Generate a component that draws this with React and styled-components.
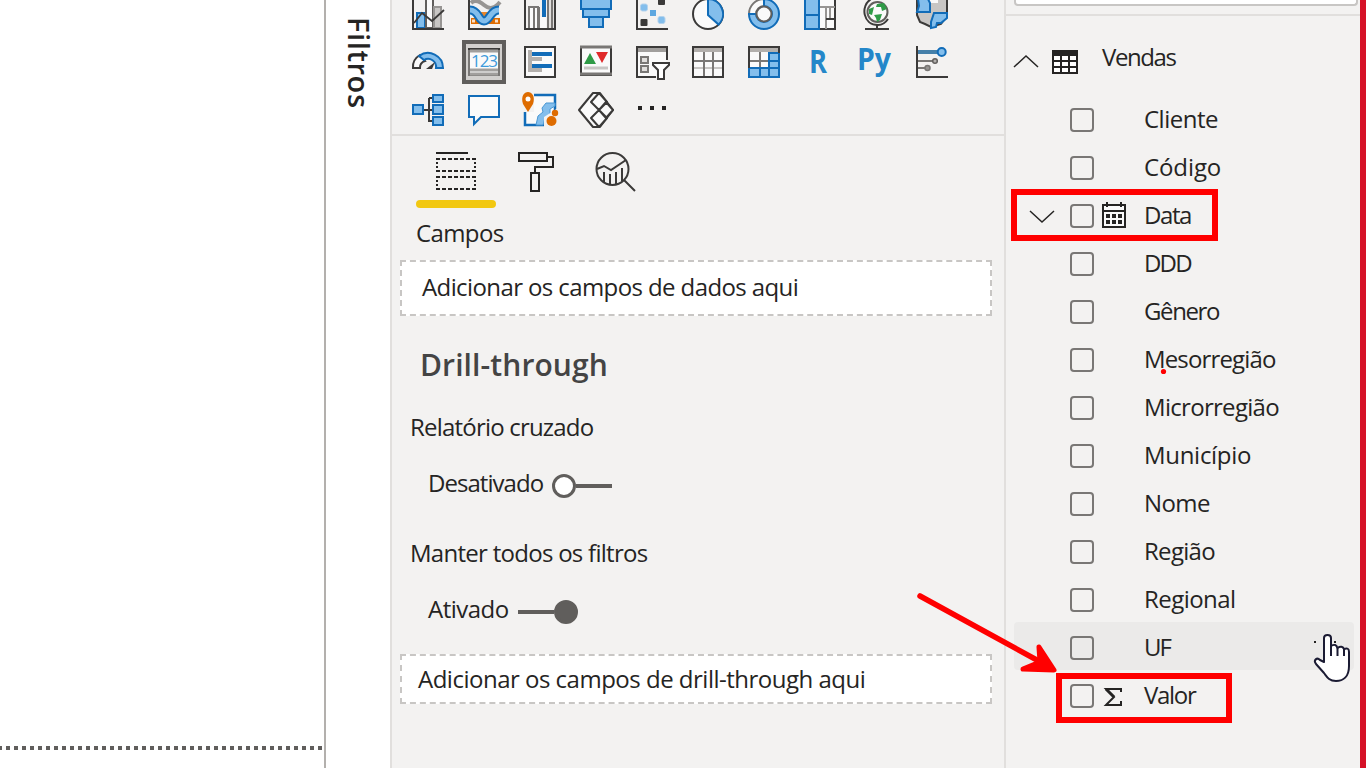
import React from "react";
import styled, { createGlobalStyle } from "styled-components";

const ink = "#252423";
const dark = "#3b3a39";
const grey = "#605e5c";
const blue = "#116cb8";
const sky = "#83beec";
const orange = "#de6c00";

const Global = createGlobalStyle`
  body { margin: 0; background: #fff; overflow: hidden; }
  * { box-sizing: border-box; }
`;

const Screen = styled.div`
  position: relative;
  display: flex;
  width: 1366px;
  height: 768px;
  overflow: hidden;
  font-family: "Open Sans", "Noto Sans", sans-serif;
  font-size: 24px;
  color: ${ink};
  white-space: nowrap;
`;

const Canvas = styled.main`
  flex: 1;
  display: flex;
  flex-direction: column;
  justify-content: flex-end;
  padding: 0 2px 18px 0;
  background: #fff;
`;

const PageEdge = styled.div`
  height: 4px;
  background: repeating-linear-gradient(90deg, ${grey} 0 4px, #fff 4px 8px) -2px 0;
`;

const FiltersPane = styled.aside`
  width: 66px;
  border-left: 2px solid #b3b0ad;
  background: #fff;
  padding: 17px 0 0 12px;
`;

const FiltersTitle = styled.div`
  writing-mode: vertical-rl;
  width: 42px;
  line-height: 42px;
  font-size: 29px;
  font-weight: 600;
  letter-spacing: 0.6px;
`;

const VisualPane = styled.section`
  width: 614px;
  overflow: hidden;
  border-left: 2px solid #e1dfdd;
  background: #f3f2f1;
`;

const VisualGrid = styled.div`
  display: grid;
  grid-template-columns: repeat(10, 56px);
  grid-auto-rows: 48px;
  margin-top: -10px;
  padding-left: 8px;
`;

const VisualCell = styled.div`
  display: flex;
  align-items: center;
  justify-content: center;
`;

const Selected = styled.div`
  display: flex;
  width: 44px;
  height: 44px;
  padding: 2px;
  border: 4px solid ${grey};
  background: #d2d0ce;
  align-items: center;
  justify-content: center;
`;

const Icon = styled.svg`
  display: block;
  flex: none;
  overflow: visible;
`;

const Tabs = styled.div`
  display: flex;
  height: 74px;
  padding-left: 24px;
  border-top: 2px solid #e1dfdd;
`;

const Tab = styled.div`
  display: flex;
  flex-direction: column;
  justify-content: space-between;
  align-items: center;
  width: 80px;
  padding-top: 16px;
`;

const TabMark = styled.div`
  width: 80px;
  height: 8px;
  border-radius: 4px;
  background: ${(p) => (p.$on ? "#f2c811" : "transparent")};
`;

const Line = styled.div`
  display: flex;
  align-items: center;
  height: 32px;
  line-height: 32px;
  margin-top: ${(p) => p.$gap || 0}px;
  padding-left: ${(p) => p.$left}px;
  letter-spacing: ${(p) => p.$track ?? -0.5}px;
`;

const DropZone = styled.div`
  display: flex;
  align-items: center;
  width: 592px;
  height: ${(p) => p.$h}px;
  margin: ${(p) => p.$gap}px 0 0 8px;
  padding: 0 0 ${(p) => p.$lift ?? 2}px ${(p) => p.$left}px;
  border: 2px dashed #c8c6c4;
  background: #fff;
  letter-spacing: ${(p) => p.$track}px;
`;

const SectionTitle = styled.h2`
  margin: 27px 0 0 28px;
  height: 44px;
  line-height: 44px;
  font-size: 30px;
  font-weight: 600;
  color: #444;
  letter-spacing: 0.1px;
`;

const Switch = styled.div`
  display: flex;
  align-items: center;
  flex-direction: ${(p) => (p.$on ? "row-reverse" : "row")};
  margin: 6px 0 0 9px;
`;
const Knob = styled.div`
  width: 24px;
  height: 24px;
  border: 3px solid ${grey};
  border-radius: 50%;
  background: ${(p) => (p.$on ? grey : "#fff")};
`;
const Track = styled.div`
  width: 36px;
  height: 4px;
  background: ${grey};
`;

const FieldsPane = styled.section`
  width: 356px;
  border-left: 2px solid #e1dfdd;
  background: #f3f2f1;
`;

const SearchSlot = styled.div`
  height: 16px;
  padding: 0 1px 0 8px;
  border-bottom: 2px solid #e1dfdd;
`;
const SearchBox = styled.div`
  width: 344px;
  height: 6px;
  border: 2px solid #c8c6c4;
  border-top: 0;
  border-radius: 0 0 4px 4px;
  background: #fff;
`;

const TableRow = styled.div`
  display: flex;
  align-items: flex-start;
  height: 78px;
  padding-left: 8px;
`;
const TableChevron = styled(Icon)`
  margin-top: 38px;
`;
const TableGlyph = styled(Icon)`
  margin: 34px 0 0 14px;
`;
const TableName = styled.div`
  margin: 24px 0 0 24px;
  line-height: 34px;
  letter-spacing: -1.4px;
`;

const FieldRow = styled.div`
  display: grid;
  grid-template-columns: 56px 32px 42px 1fr;
  align-items: center;
  height: 48px;
  margin: 0 6px 0 8px;
  border-radius: 4px;
  background: ${(p) => (p.$hover ? "#ebeae9" : "transparent")};
`;
const Slot = styled.div`
  padding: ${(p) => p.$top || 0}px 0 0 ${(p) => p.$left || 0}px;
`;
const Check = styled.div`
  width: 24px;
  height: 24px;
  margin-top: 4px;
  border: 2px solid #797775;
  border-radius: 4px;
`;
const FieldName = styled.div`
  padding-top: 2px;
  line-height: 34px;
  letter-spacing: ${(p) => p.$track}px;
`;

const RedStrip = styled.div`
  width: 6px;
  background: #d51127;
`;

const Highlight = styled.div`
  position: absolute;
  left: ${(p) => p.$x}px;
  top: ${(p) => p.$y}px;
  width: ${(p) => p.$w}px;
  height: ${(p) => p.$h}px;
  border: 6px solid #f00;
`;
const Overlay = styled.svg`
  position: absolute;
  left: ${(p) => p.$x}px;
  top: ${(p) => p.$y}px;
  overflow: visible;
`;

const axis = <path d="M1 -2V31H32" fill="none" stroke={dark} strokeWidth="2" />;

const visuals = [
  <g>
    <rect x="5" y="15" width="8" height="15" fill={sky} stroke={blue} strokeWidth="2" />
    <rect x="14" y="1" width="7" height="29" fill="#fafafa" stroke={grey} strokeWidth="2" />
    <rect x="22" y="9" width="7" height="21" fill="#c8c6c4" stroke="#979593" strokeWidth="2" />
    <path d="M2 25L10 15L20 23L32 12" fill="none" stroke={dark} strokeWidth="1.800" />
    <path d="M1 0V31H32" fill="none" stroke={dark} strokeWidth="2" />
  </g>,
  <g>
    <path d="M3 5Q8 0 16 7Q24 14 32 4" fill="none" stroke="#979593" strokeWidth="4" />
    <path d="M3 23H32" fill="none" stroke={orange} strokeWidth="6" />
    <path d="M4 23H7M27 23H30" stroke="#f8e0c8" strokeWidth="3" />
    <path d="M11 14H22L17 21Z" fill="#e8862a" />
    <path d="M2 12C11 12 10 23 16 23S22 12 31 12" fill="none" stroke={blue} strokeWidth="9" />
    <path d="M2 12C11 12 10 23 16 23S22 12 31 12" fill="none" stroke={sky} strokeWidth="5" />
    {axis}
  </g>,
  <g>
    <path d="M5 30V9H14V30M10 10V30" fill="#fafafa" stroke="#797775" strokeWidth="2" />
    <rect x="18" y="0" width="4" height="19" fill={blue} />
    <rect x="15" y="19" width="7" height="11" fill="#fafafa" />
    <path d="M24 30V1H31V30Z" fill="#e1dfdd" />
    <path d="M15 30V9M24 30V1H31V30M28 1V30" fill="none" stroke="#797775" strokeWidth="2" />
    <path d="M1 0V31H31V0" fill="none" stroke={dark} strokeWidth="2" />
  </g>,
  <g fill={sky} stroke={blue} strokeWidth="2">
    <rect x="1" y="1" width="30" height="10" />
    <rect x="3" y="11" width="26" height="8" />
    <rect x="9" y="19" width="14" height="10" />
  </g>,
  <g>
    {axis}
    <rect x="22" y="0" width="7" height="7" rx="1" fill={dark} />
    <rect x="4.500" y="21" width="7" height="7" rx="1" fill={dark} />
    <rect x="4.500" y="6" width="7" height="7" rx="2" fill={sky} stroke="#b5d3ec" />
    <rect x="14" y="12" width="6" height="6" fill="#5da7e0" />
    <rect x="22" y="18.500" width="7" height="7" rx="2" fill={sky} stroke="#b5d3ec" />
  </g>,
  <g strokeWidth="2">
    <circle cx="16" cy="16" r="15" fill="#fafafa" stroke={dark} />
    <path d="M16 1A15 15 0 0 1 26.600 26.600L16 17Z" fill={sky} stroke={blue} />
  </g>,
  <g strokeWidth="2">
    <path d="M1 16A15 15 0 0 1 16 1V8A8 8 0 0 0 8 16Z" fill="#fafafa" stroke="#797775" />
    <path d="M16 1A15 15 0 1 1 1 16H8A8 8 0 1 0 16 8Z" fill={sky} stroke={blue} />
    <circle cx="16" cy="16" r="7.500" fill="#fafafa" stroke="#605e5c" />
  </g>,
  <g strokeWidth="2">
    <rect x="15" y="1" width="16" height="30" fill="#fafafa" stroke={dark} />
    <path d="M16 9H31M22 9V31M26 9V20" stroke="#979593" fill="none" />
    <path d="M22 21H31" stroke={dark} />
    <path d="M1 1H15V31H1ZM1 17H15" fill={sky} stroke={blue} />
  </g>,
  <g fill="none">
    <circle cx="17.500" cy="14" r="10" fill="#fafafa" stroke={grey} strokeWidth="2" />
    <path d="M17 6L24 5L27 11L22 13L21 9L16 9ZM9 11L14 9L12 17L9 16ZM14 17L22 16L20 22L17 24L16 20Z" fill="#2f9b47" />
    <path d="M11 1C0 8 3 27 18 27C23 27 26 24 28 21" stroke={dark} strokeWidth="2" />
    <path d="M17 27V31M5 31H29" stroke={dark} strokeWidth="2" />
  </g>,
  <g strokeWidth="2">
    <path d="M1 1H31V18L25 26L15 29L9 26L4 24L1 17Z" fill="#c8c6c4" stroke={dark} />
    <path d="M12 1H22V5H12Z" fill="#fafafa" stroke="none" />
    <path d="M2 1H12L14 5V14H1L3 8Z" fill={sky} stroke={blue} />
    <path d="M18 15H31V20L25 25H21L20 29L15 30L15 24Z" fill={sky} stroke={blue} />
  </g>,
  <g strokeWidth="2">
    <path d="M1 22A15 14 0 0 1 8 9L13 15A7 7 0 0 0 8 22Z" fill="#fafafa" stroke={dark} />
    <path d="M7 10A15 15 0 0 1 31 22H24A8 8 0 0 0 12 14Z" fill={sky} stroke={blue} />
    <path d="M14 23L23 16L20 23Z" fill={dark} />
  </g>,
  <g>
    <rect x="1" y="3" width="30" height="26" fill="#fafafa" stroke="#797775" strokeWidth="2" />
    <path d="M0 3H32" stroke={dark} strokeWidth="2" />
    <path d="M2 5H30M2 24H30M2 28H30" stroke="#a19f9d" strokeWidth="3" />
    <text x="16" y="21" textAnchor="middle" fontFamily="Open Sans, sans-serif" fontSize="17" letterSpacing="-1" fill="#3e9bdc">123</text>
  </g>,
  <g>
    <rect x="1" y="1" width="30" height="30" fill="#fafafa" stroke={dark} strokeWidth="2" />
    <path d="M6 4V26M8 13H18M8 24H18" stroke="#b3b0ad" strokeWidth="4" />
    <path d="M8 8H28M8 20H28" stroke={blue} strokeWidth="4" />
  </g>,
  <g>
    <rect x="1" y="1" width="30" height="28" fill="#fafafa" stroke={dark} strokeWidth="2" />
    <path d="M0 1H32M0 28H32" stroke="#797775" strokeWidth="3" />
    <path d="M4 18L10 7L16 18Z" fill="#2f9b47" />
    <path d="M16 6H28L22 17Z" fill="#e02b2b" />
    <path d="M4 22H28" stroke="#c8c6c4" strokeWidth="3" />
  </g>,
  <g>
    <path d="M31 14V1H1V31H20" fill="#fafafa" stroke={dark} strokeWidth="2" />
    <path d="M2 4H30" stroke="#a19f9d" strokeWidth="4" />
    <rect x="5" y="11" width="7" height="6" fill="#e1dfdd" stroke="#797775" strokeWidth="2" />
    <rect x="5" y="20" width="7" height="6" fill="#e1dfdd" stroke="#797775" strokeWidth="2" />
    <path d="M17 17H33V19L28 24V33H22V24L17 19Z" fill="#fff" stroke={dark} strokeWidth="2" />
  </g>,
  <g fill="none" strokeWidth="2">
    <rect x="1" y="1" width="30" height="30" fill="#fafafa" stroke={dark} />
    <path d="M2 4H30" stroke="#b3b0ad" strokeWidth="4" />
    <path d="M1 22H31" stroke="#c8c6c4" />
    <path d="M12 6V31M21 6V31M1 15H31" stroke="#797775" />
    <rect x="1" y="1" width="30" height="30" stroke={dark} />
  </g>,
  <g fill="none" strokeWidth="2">
    <rect x="1" y="1" width="30" height="30" fill="#fafafa" stroke={dark} />
    <path d="M2 4H30" stroke="#b3b0ad" strokeWidth="4" />
    <path d="M12 6V22M2 15H20" stroke="#797775" />
    <path d="M21 7H31V31H1V22H21Z" fill={sky} stroke={blue} />
    <path d="M21 15H31M21 22H31M12 22V31M21 22V31" stroke={blue} />
    <path d="M1 22V1H31V7" stroke={dark} />
  </g>,
  <text x="5" y="27" textLength="18" lengthAdjust="spacingAndGlyphs" fontFamily="Open Sans, sans-serif" fontWeight="700" fontSize="33" fill="#2487c9">R</text>,
  <text x="-3" y="24" textLength="34" lengthAdjust="spacingAndGlyphs" fontFamily="Open Sans, sans-serif" fontWeight="700" fontSize="30" fill="#2487c9">Py</text>,
  <g>
    <path d="M2 6H22" stroke="#4580aa" strokeWidth="4" />
    <circle cx="25.700" cy="6" r="4" fill={sky} stroke={blue} strokeWidth="2" />
    <path d="M2 15H17M2 22H10" stroke="#797775" strokeWidth="2" />
    <circle cx="19" cy="15" r="2.300" fill="#b3b0ad" stroke="#605e5c" strokeWidth="1.500" />
    <circle cx="11.500" cy="22" r="2.500" fill="#979593" stroke="#797775" strokeWidth="1.500" />
    <path d="M1 0V31H32" fill="none" stroke={dark} strokeWidth="2" />
  </g>,
  <g strokeWidth="2" fill={sky} stroke={blue}>
    <path d="M12 16H20M17 4V28M17 4H20M17 27H20" stroke={dark} fill="none" />
    <rect x="1" y="11" width="10" height="9" />
    <rect x="21" y="1" width="10" height="7" />
    <rect x="21" y="11" width="10" height="9" />
    <rect x="21" y="23" width="10" height="8" />
  </g>,
  <path d="M1 2H31V23H13L6 30V23H1Z" fill="#fafafa" stroke={blue} strokeWidth="2" />,
  <g>
    <path d="M1 1H31V31H1Z" fill="#fafafa" stroke={blue} strokeWidth="2.500" />
    <path d="M31 9L22 9L18 14L19 18L14 22L12 31H19L21 24L26 20V15L31 12Z" fill={sky} stroke="#4a98d4" />
    <path d="M-1 -2H10V18H-1Z" fill="#f3f2f1" />
    <path d="M4 18L-1 10C-6 -6 14 -6 9 10Z" fill={orange} />
    <circle cx="4" cy="5" r="2.500" fill="#fff" />
    <path d="M20 23L34 14V34H20Z" fill="#f3f2f1" />
    <circle cx="27.500" cy="27" r="5" fill={orange} />
    <circle cx="31" cy="19" r="3.200" fill={orange} />
  </g>,
  <g fill="#fafafa" stroke={dark} strokeWidth="2" strokeLinejoin="round">
    <path d="M13 -1L-1 16L13 33H20L33 16L20 -1Z" />
    <path d="M19 -1L11 8L19 16L27 8ZM26 8L19 16L26 24L33 16ZM19 16L11 24L19 33L27 24Z" />
  </g>,
  <path d="M2 12H6V16H2ZM14 12H18V16H14ZM26 12H30V16H26Z" fill={ink} />,
];

const fields = [
  { name: "Cliente", track: -0.5 },
  { name: "Código", track: -0.1 },
  { name: "Data", track: -1.4, kind: "date" },
  { name: "DDD", track: -1.8 },
  { name: "Gênero", track: -1.4 },
  { name: "Mesorregião", track: -0.85 },
  { name: "Microrregião", track: -0.7 },
  { name: "Município", track: -0.3 },
  { name: "Nome", track: -0.6 },
  { name: "Região", track: -0.7 },
  { name: "Regional", track: -0.55 },
  { name: "UF", track: -2, hover: true },
  { name: "Valor", track: -1.3, kind: "sum" },
];

const Visual = ({ art }) => (
  <Icon width="32" height="32" viewBox="0 0 32 32">{art}</Icon>
);

const CalendarIcon = () => (
  <Icon width="24" height="26" viewBox="0 0 24 26">
    <path d="M1 3H23V25H1ZM1 9H23M5 0V5M19 0V5" fill="#fafafa" stroke={ink} strokeWidth="2" />
    <path d="M4 14H20M4 20H20" stroke={ink} strokeWidth="4" strokeDasharray="4 2" />
  </Icon>
);

const SigmaIcon = () => (
  <Icon width="18" height="18" viewBox="0 0 18 18">
    <path d="M17 4V1H2L10 9L2 17H17V13" fill="none" stroke={ink} strokeWidth="2" />
    <path d="M2 1L10 9" stroke={ink} strokeWidth="3" />
  </Icon>
);

const Field = ({ name, track, kind, hover }) => (
  <FieldRow $hover={hover}>
    <Slot $left={16} $top={5}>
      {kind === "date" && (
        <Icon width="24" height="12" viewBox="0 0 24 12">
          <path d="M0 0L12 11L24 0" fill="none" stroke={ink} strokeWidth="1.500" />
        </Icon>
      )}
    </Slot>
    <Check />
    <Slot $left={kind === "sum" ? 2 : 0} $top={kind === "sum" ? 6 : 2}>
      {kind === "date" && <CalendarIcon />}
      {kind === "sum" && <SigmaIcon />}
    </Slot>
    <FieldName $track={track}>{name}</FieldName>
  </FieldRow>
);

const Toggle = ({ on }) => (
  <Switch $on={on}>
    <Knob $on={on} />
    <Track />
  </Switch>
);

export default function App() {
  return (
    <Screen>
      <Global />
      <Canvas><PageEdge /></Canvas>
      <FiltersPane><FiltersTitle>Filtros</FiltersTitle></FiltersPane>
      <VisualPane>
        <VisualGrid>
          {visuals.map((art, i) => (
            <VisualCell key={i}>
              {i === 11 ? <Selected><Visual art={art} /></Selected> : <Visual art={art} />}
            </VisualCell>
          ))}
        </VisualGrid>
        <Tabs>
          <Tab>
            <Icon width="40" height="40" viewBox="0 0 40 40" fill="none" stroke={ink} strokeWidth="2">
              <path d="M0 1H32" />
              <path d="M0 7H40M0 19H40M0 25H40M0 37H40" strokeDasharray="4 2" />
              <path d="M1 6V20M39 6V20M1 24V38M39 24V38" strokeDasharray="2 2" />
            </Icon>
            <TabMark $on />
          </Tab>
          <Tab>
            <Icon width="36" height="40" viewBox="0 0 36 40" fill="none" stroke={ink} strokeWidth="2">
              <path d="M1 1H29V9H1ZM29 5H35V15H17V21M13 21H21V39H13Z" />
            </Icon>
            <TabMark />
          </Tab>
          <Tab>
            <Icon width="40" height="40" viewBox="0 0 40 40" fill="none" stroke={dark} strokeWidth="2">
              <circle cx="16.500" cy="17" r="16" />
              <path d="M1 17L8 14L15 18L30 8M28 28L39 39" />
              <path d="M8 20V30M14 22V33M20 20V33M26 16V29" />
            </Icon>
            <TabMark />
          </Tab>
        </Tabs>
        <Line $gap={9} $left={24} $track={-0.6}>Campos</Line>
        <DropZone $gap={11} $h={56} $left={20} $track={-0.6} $lift={4}>Adicionar os campos de dados aqui</DropZone>
        <SectionTitle>Drill-through</SectionTitle>
        <Line $gap={24} $left={18} $track={-0.8}>Relatório cruzado</Line>
        <Line $gap={24} $left={36} $track={-0.95}>Desativado<Toggle /></Line>
        <Line $gap={38} $left={18} $track={-0.72}>Manter todos os filtros</Line>
        <Line $gap={24} $left={36}>Ativado<Toggle on /></Line>
        <DropZone $gap={29} $h={50} $left={16} $track={-0.5}>Adicionar os campos de drill-through aqui</DropZone>
      </VisualPane>
      <FieldsPane>
        <SearchSlot><SearchBox /></SearchSlot>
        <TableRow>
          <TableChevron width="24" height="14" viewBox="0 0 24 14">
            <path d="M0 13L12 2L24 13" fill="none" stroke={ink} strokeWidth="1.500" />
          </TableChevron>
          <TableGlyph width="26" height="24" viewBox="0 0 26 24">
            <path d="M0 0H26V24H0Z" fill={ink} />
            <path d="M2 8H24M2 14H24M2 20H24" stroke="#fff" strokeWidth="4" strokeDasharray="6 2" />
          </TableGlyph>
          <TableName>Vendas</TableName>
        </TableRow>
        {fields.map((f) => <Field key={f.name} {...f} />)}
      </FieldsPane>
      <RedStrip />
      <Highlight $x={1011} $y={189} $w={207} $h={52} />
      <Highlight $x={1056} $y={673} $w={176} $h={50} />
      <Overlay $x={1160} $y={368} width="6" height="6"><circle cx="3.500" cy="3.500" r="2.600" fill="#f00" /></Overlay>
      <Overlay $x={916} $y={592} width="142" height="84" viewBox="0 0 142 84" fill="#f00" stroke="#f00" strokeLinecap="round" strokeLinejoin="round">
        <path d="M4 4L130 73" strokeWidth="5.500" />
        <path d="M123 55L138 78L107 77L124 70Z" strokeWidth="5" />
      </Overlay>
      <Overlay $x={1314} $y={634} width="36" height="48" viewBox="0 0 36 48">
        <path d="M0 7H2V9H0ZM20 7H22V9H20Z" fill={ink} />
        <path d="M10 28V4Q10 1 13.500 1T17 4V12Q22 9 23.500 14Q28 11 30 15Q35 13 35 18V32C35 43 29 47 22 47C15 47 13 43 10 39L2 30C-1 26 3 23 6 26Z" fill="#fff" stroke="#1b1b33" strokeWidth="2" strokeLinejoin="round" />
        <path d="M17 11V22M23.500 13V22M30 15V22" stroke="#1b1b33" strokeWidth="2" />
      </Overlay>
    </Screen>
  );
}
